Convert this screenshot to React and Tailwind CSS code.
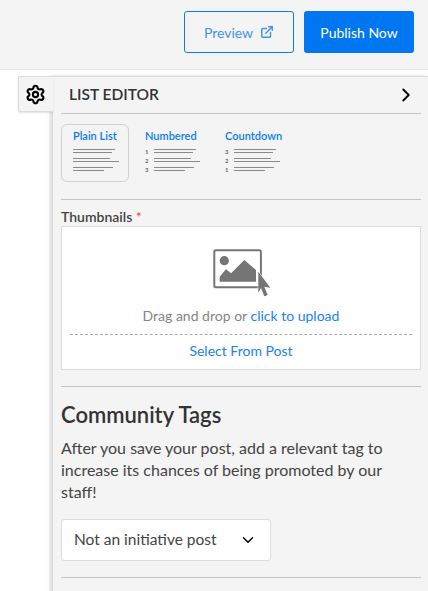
import React from "react";
import { ChevronDown, ChevronRight, ExternalLink, Settings } from "lucide-react";

const lineWidths = [42, 39, 37, 46, 40, 31];

const MiniList = ({ numbers }) => (
  <svg width="60" height="26" viewBox="0 0 60 26" className="block">
    {lineWidths.map((w, i) => {
      const y = [1.5, 4.5, 10.5, 13.5, 19.5, 22.5][i];
      const x = numbers ? 9 : 0;
      return <line key={i} x1={x} x2={x + w} y1={y} y2={y} stroke="#8a8a8a" strokeWidth="1" />;
    })}
    {numbers &&
      numbers.map((n, i) => (
        <text key={i} x="0" y={5.5 + i * 9} fontSize="6" fontWeight="900" fill="#777" fontFamily="Lato, sans-serif">
          {n}
        </text>
      ))}
  </svg>
);

const ListType = ({ label, numbers, active }) => (
  <div
    className={`h-[58px] rounded-md border pt-[4px] pl-[11px] ${
      active ? "w-[68px] border-[#d0d0d0]" : "w-[76px] border-transparent"
    }`}
  >
    <p className="mb-[5px] text-[11px] leading-[14px] font-semibold whitespace-nowrap text-[#0a7cf0]">{label}</p>
    <MiniList numbers={numbers} />
  </div>
);

const UploadIcon = () => (
  <svg width="58" height="48" viewBox="212 249 58 48" className="block">
    <rect x="213.3" y="250.3" width="46.6" height="37" rx="1.5" fill="none" stroke="#757575" strokeWidth="2" />
    <circle cx="223.3" cy="260.7" r="4.6" fill="#757575" />
    <path d="M218.7 281.7V276.7L225 269.3L230 273.3L243.3 260L255 270V281.7Z" fill="#757575" />
    <path
      d="M257.3 271.7L269.3 287.7L263.3 286.7L266.7 295L263.3 296.3L260 288L257.3 292.7Z"
      fill="#757575"
      stroke="#fff"
      strokeWidth="1"
      paintOrder="stroke"
    />
  </svg>
);

export default function App() {
  return (
    <div className="h-[591px] w-[428px] overflow-hidden bg-white font-['Lato',sans-serif] text-[#333]">
      <header className="flex h-[70px] items-start justify-end gap-[10px] border-b border-[#e6e6e6] bg-[#f4f4f4] pt-[11px] pr-[14px]">
        <button className="flex h-[42px] w-[110px] items-center justify-center gap-[7px] rounded-[3px] border border-[#0a7cf0] text-[14px] text-[#3f93f0]">
          Preview
          <ExternalLink size={14} strokeWidth={2.5} />
        </button>
        <button className="h-[42px] w-[110px] rounded-[3px] bg-[#0077f0] text-[14px] text-white">Publish Now</button>
      </header>

      <div className="flex pt-[6px] pl-[18px]">
        <div className="relative z-10 -mr-[1px] flex h-[36px] w-[35px] items-center justify-center rounded-bl-[3px] border-t border-b border-l border-[#dcdcdc] bg-[#f4f4f4] pr-[1px] shadow-[0_1px_2px_rgba(0,0,0,0.12)]">
          <Settings size={21} strokeWidth={2.4} className="text-black" />
        </div>

        <div className="h-[520px] w-[376px] border-t border-l border-[#dcdcdc] bg-[#f4f4f4] pr-[7px] pl-[8px] shadow-[-2px_0_3px_rgba(0,0,0,0.15)]">
          <div className="flex h-[37px] items-center justify-between border-b border-[#c4c4c4] pr-[4px] pl-[8px]">
            <h2 className="text-[15.5px] font-semibold text-[#333]">LIST EDITOR</h2>
            <ChevronRight size={22} strokeWidth={2} className="text-black" />
          </div>

          <div className="mt-[10px] flex gap-[4px]">
            <ListType label="Plain List" active />
            <ListType label="Numbered" numbers={["1", "2", "3"]} />
            <ListType label="Countdown" numbers={["3", "2", "1"]} />
          </div>

          <div className="mt-[17px] border-t border-[#c4c4c4] pt-[9px]">
            <p className="text-[14px] leading-[16px] font-semibold text-[#444]">
              Thumbnails <span className="font-normal text-[#e5484d]">*</span>
            </p>
          </div>

          <div className="mt-[1px] h-[144px] border border-[#dcdcdc] bg-white px-[8px] pt-[22px]">
            <div className="flex justify-center pl-[2px]">
              <UploadIcon />
            </div>
            <p className="mt-[10px] text-center text-[14px] leading-[18px] text-[#858585]">
              Drag and drop or <span className="text-[#1a82f0]">click to upload</span>
            </p>
            <div className="mt-[9px] border-t border-dashed border-[#aaa] pt-[7px] text-center text-[14px] leading-[18px] text-[#1a82f0]">
              Select From Post
            </div>
          </div>

          <div className="mt-[16px] border-t border-[#c4c4c4] pt-[14px]">
            <h3 className="text-[22px] leading-[27px] font-semibold text-[#333]">Community Tags</h3>
            <p className="mt-[9px] text-[16px] leading-[22px] text-[#444]">
              After you save your post, add a relevant tag to increase its chances of being promoted by our staff!
            </p>
            <div className="mt-[16px] flex h-[42px] w-[210px] items-center justify-between rounded-[3px] border border-[#dcdcdc] bg-white pr-[13px] pl-[12px] text-[15.5px] text-[#444]">
              Not an initiative post
              <ChevronDown size={18} strokeWidth={2} className="text-black" />
            </div>
          </div>

          <div className="mt-[16px] border-t border-[#c4c4c4]" />
        </div>
      </div>
    </div>
  );
}
